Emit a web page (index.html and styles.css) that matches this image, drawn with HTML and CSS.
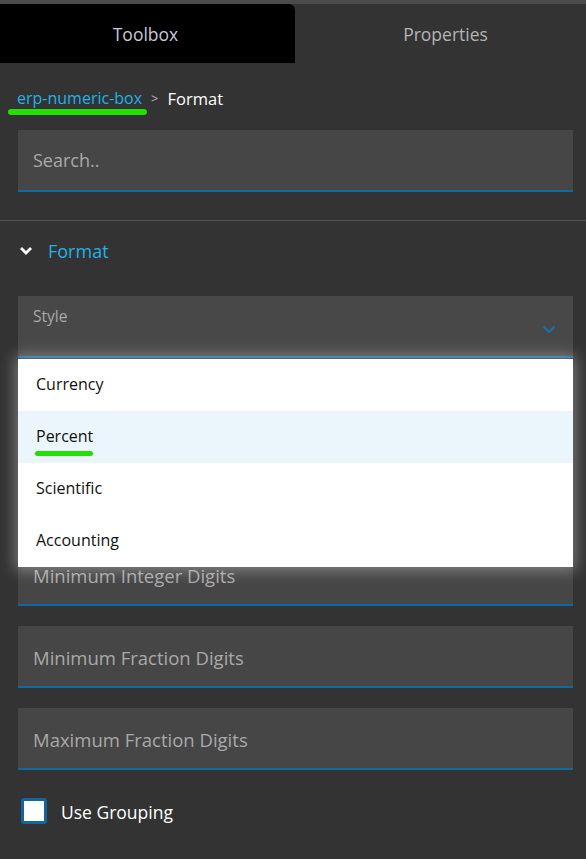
FILE: index.html
```html
<!DOCTYPE html>
<html>
<head>
<meta charset="utf-8">
<link rel="stylesheet" href="styles.css">
</head>
<body>
<div class="panel">
  <div class="topstrip"></div>
  <div class="tabs">
    <div class="tab active">Toolbox</div>
    <div class="tab">Properties</div>
  </div>
  <div class="crumbs">
    <span class="crumb-link">erp-numeric-box<span class="mark mark-crumb"></span></span>
    <span class="crumb-sep">&gt;</span>
    <span class="crumb-current">Format</span>
  </div>
  <div class="field search"><span class="placeholder">Search..</span></div>
  <div class="divider"></div>
  <div class="section-head">
    <svg class="chev-white" width="14" height="10" viewBox="0 0 14 10"><path d="M2 2 L7 7 L12 2" fill="none" stroke="#ffffff" stroke-width="2.8"/></svg>
    <span class="section-title">Format</span>
  </div>
  <div class="select-wrap">
    <div class="select">
      <span class="select-label">Style</span>
      <svg class="chev-blue" width="14" height="9" viewBox="0 0 14 9"><path d="M1.5 1.5 L7 7 L12.5 1.5" fill="none" stroke="#1a6ea8" stroke-width="2.2"/></svg>
    </div>
    <div class="menu">
      <div class="option">Currency</div>
      <div class="option hover">Percent<span class="mark mark-opt"></span></div>
      <div class="option">Scientific</div>
      <div class="option">Accounting</div>
    </div>
  </div>
  <div class="fields">
    <div class="field"><span class="placeholder">Minimum Integer Digits</span></div>
    <div class="field"><span class="placeholder">Minimum Fraction Digits</span></div>
    <div class="field"><span class="placeholder">Maximum Fraction Digits</span></div>
  </div>
  <label class="check-row">
    <span class="checkbox"></span>
    <span class="check-label">Use Grouping</span>
  </label>
</div>
</body>
</html>
```

FILE: styles.css
```css
html, body {
  margin: 0;
  padding: 0;
  background: #333333;
}
body {
  font-family: "Open Sans", "Liberation Sans", sans-serif;
  width: 586px;
  height: 859px;
  overflow: hidden;
}
.panel {
  display: flex;
  flex-direction: column;
}
.topstrip {
  height: 4px;
  background: #4b4b4b;
}
.tabs {
  display: flex;
  height: 59px;
}
.tab {
  flex: 1;
  display: flex;
  align-items: center;
  justify-content: center;
  font-size: 17.5px;
  color: #b4b4b4;
  padding-top: 1px;
  padding-left: 10px;
}
.tab.active {
  flex: 0 0 295px;
  padding-left: 0;
  padding-right: 4px;
  box-sizing: border-box;
  background: #000000;
  color: #c8c8d4;
  border-top-right-radius: 6px;
}
.crumbs {
  height: 67px;
  display: flex;
  align-items: center;
  padding-left: 17px;
  padding-top: 3px;
  box-sizing: border-box;
  font-size: 16px;
  gap: 9px;
}
.crumb-link {
  color: #1eb2e8;
  position: relative;
}
.crumb-sep {
  color: #b8b8b8;
  font-size: 13px;
}
.crumb-current {
  color: #ffffff;
  font-size: 16.5px;
}
.mark {
  position: absolute;
  height: 6px;
  border-radius: 3px;
  background: #22e000;
}
.mark-crumb {
  left: -9px;
  width: 139px;
  top: 22px;
}
.field {
  margin: 0 13px 0 18px;
  height: 60px;
  background: #464646;
  border-bottom: 2px solid #0f6aa0;
  display: flex;
  align-items: center;
  padding-left: 15px;
}
.placeholder {
  color: #a9a9a9;
  font-size: 18.5px;
  padding-top: 3px;
}
.search .placeholder {
  padding-top: 0;
  font-size: 18px;
}
.divider {
  margin-top: 28px;
  height: 1px;
  background: #555555;
}
.section-head {
  height: 60px;
  display: flex;
  align-items: center;
  padding-left: 19px;
  gap: 15px;
}
.section-title {
  color: #1eb2e8;
  font-size: 18px;
}
.select-wrap {
  position: relative;
  margin: 15px 13px 0 18px;
}
.select {
  height: 60px;
  background: #484848;
  border-bottom: 2px solid #1a6ea8;
  position: relative;
  padding-left: 15px;
}
.select-label {
  display: block;
  padding-top: 9px;
  color: #a9a9a9;
  font-size: 15.5px;
}
.chev-blue {
  position: absolute;
  right: 17px;
  top: 29px;
}
.menu {
  position: absolute;
  left: 0;
  right: 0;
  top: 63px;
  background: #ffffff;
  z-index: 5;
  box-shadow: 0 0 14px 3px rgba(255, 255, 255, 0.35);
}
.option {
  height: 52px;
  display: flex;
  align-items: center;
  padding-left: 18px;
  padding-bottom: 3px;
  box-sizing: border-box;
  font-size: 16px;
  color: #111111;
  position: relative;
}
.option.hover {
  background: #ebf6fc;
}
.mark-opt {
  left: 17px;
  width: 58px;
  top: 40px;
  height: 5px;
}
.fields {
  margin-top: 186px;
  display: flex;
  flex-direction: column;
  gap: 20px;
}
.check-row {
  display: flex;
  align-items: center;
  gap: 14px;
  margin: 28px 0 0 21px;
}
.checkbox {
  width: 20px;
  height: 20px;
  border: 3px solid #10679c;
  border-radius: 3px;
  background: #ffffff;
}
.check-label {
  color: #ffffff;
  font-size: 17.5px;
  padding-top: 1px;
}
```
